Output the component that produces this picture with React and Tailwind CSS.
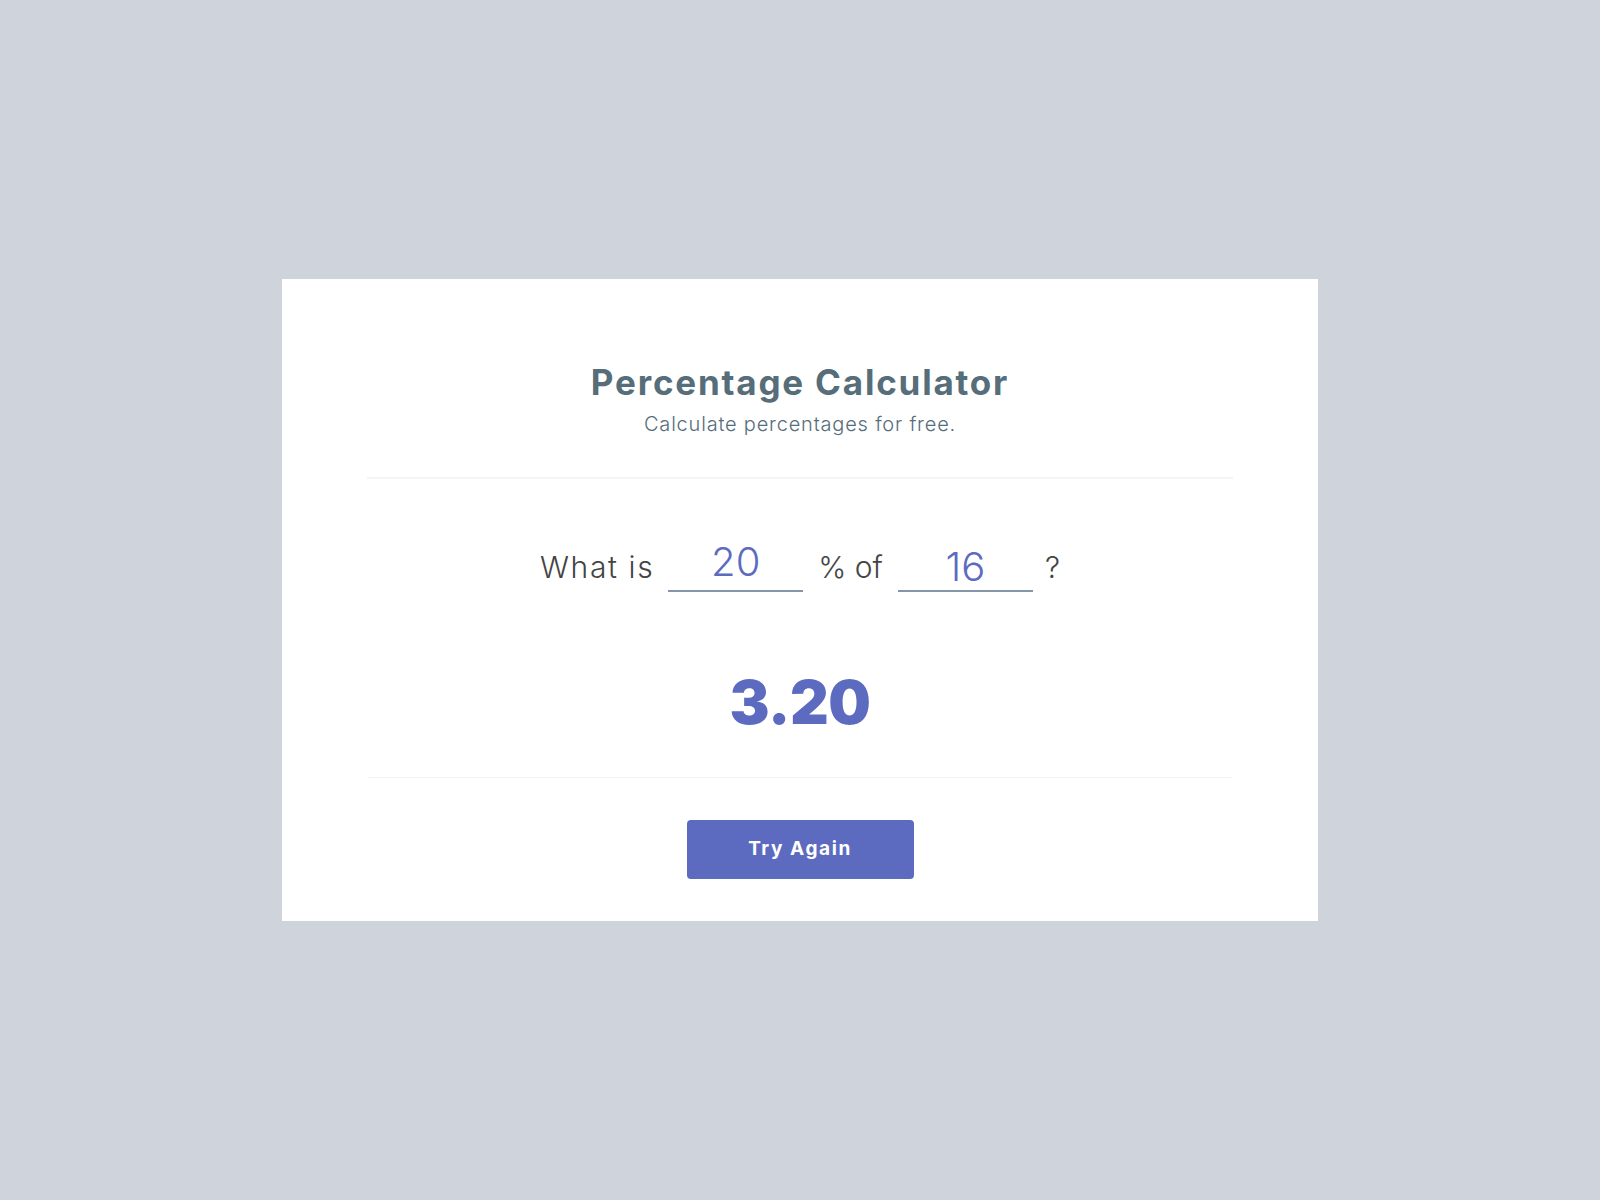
export default function App() {
  return (
    <div className="min-h-screen w-full bg-[#cfd3dc] flex items-center justify-center" style={{ fontFamily: "Inter, 'Liberation Sans', sans-serif" }}>
      <div className="w-[1036px] h-[642px] bg-white px-[85px] pt-[83px] pb-[42px] flex flex-col">
        <div className="flex flex-col items-center">
          <h1 className="text-[35px] leading-[40px] font-bold text-[#566d7a] tracking-[1.8px]">Percentage Calculator</h1>
          <p className="mt-[10px] text-[20px] leading-[24px] font-light text-[#566d7a] tracking-[0.8px]">Calculate percentages for free.</p>
        </div>
        <div className="mt-[41px] h-[2px] bg-[#f3f4f5]" />
        <div className="mt-[67px] flex items-end justify-center text-[30px] leading-[40px] text-[#444] font-light">
          <span className="mb-[5px] mr-[14px] tracking-[1.6px]">What is</span>
          <div className="w-[135px] h-[46px] border-b-2 border-[#8795a8] flex items-end justify-center">
            <span className="text-[40px] leading-[46px] text-[#5c6bc0] font-light -translate-y-[5px]">20</span>
          </div>
          <span className="mb-[5px] ml-[15px] mr-[15px]">% of</span>
          <div className="w-[135px] h-[46px] border-b-2 border-[#8795a8] flex items-end justify-center">
            <span className="text-[40px] leading-[46px] text-[#5c6bc0] font-light">16</span>
          </div>
          <span className="mb-[5px] ml-[12px]">?</span>
        </div>
        <div className="mt-[80px] flex justify-center">
          <span className="text-[60px] leading-[60px] font-black text-[#5c6bc0] tracking-[-0.5px]">3.20</span>
        </div>
        <div className="mt-[45px] h-[2px] bg-[#f3f4f5]" />
        <div className="mt-[42px] flex justify-center">
          <button className="w-[227px] h-[59px] rounded-[4px] bg-[#5c6bc0] text-white text-[19px] font-bold tracking-[1.6px]">Try Again</button>
        </div>
      </div>
    </div>
  );
}
